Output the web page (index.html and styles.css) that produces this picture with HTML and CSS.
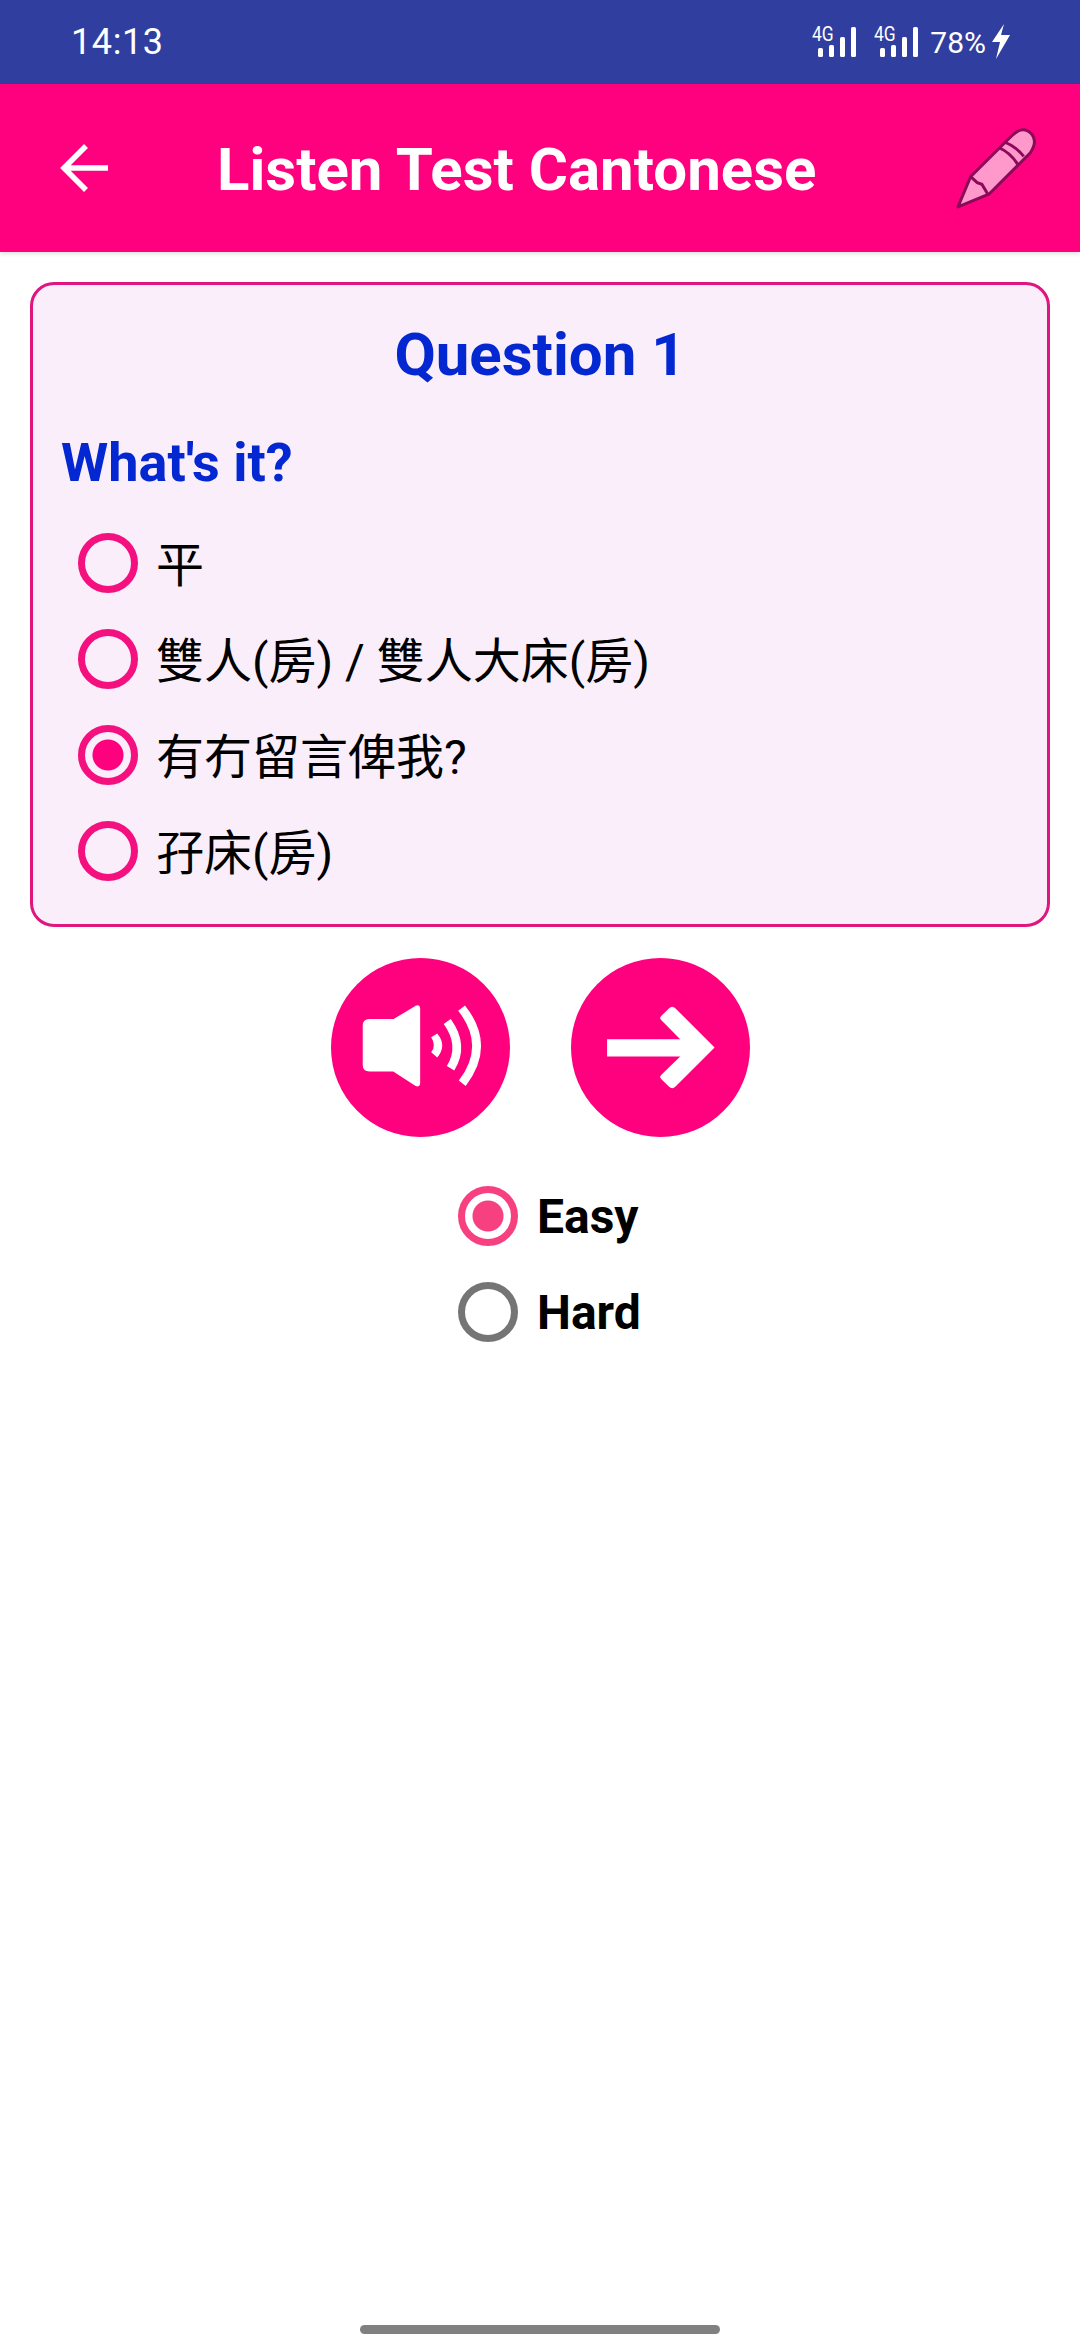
FILE: index.html
```html
<!DOCTYPE html>
<html lang="en">
<head>
    <meta charset="UTF-8">
    <title>Listen Test Cantonese</title>
    <link rel="stylesheet" href="styles.css">
</head>
<body>
    <div class="status-bar">
        <span class="time">14:13</span>
        <div class="status-right">
            <div class="signal">
                <span class="net">4G</span>
                <svg viewBox="0 0 45 30">
                    <rect x="6" y="21" width="5" height="9" rx="1.5"/>
                    <rect x="17" y="18" width="5" height="12" rx="1.5"/>
                    <rect x="28" y="10" width="5" height="20" rx="1.5"/>
                    <rect x="39" y="0" width="5" height="30" rx="1.5"/>
                </svg>
            </div>
            <div class="signal">
                <span class="net">4G</span>
                <svg viewBox="0 0 45 30">
                    <rect x="6" y="21" width="5" height="9" rx="1.5"/>
                    <rect x="17" y="18" width="5" height="12" rx="1.5"/>
                    <rect x="28" y="10" width="5" height="20" rx="1.5"/>
                    <rect x="39" y="0" width="5" height="30" rx="1.5"/>
                </svg>
            </div>
            <span class="battery">78%</span>
            <svg class="bolt" viewBox="0 0 20 36"><path d="M13 0 L1 18 H9 L5 35 L19 11 H10 Z"/></svg>
        </div>
    </div>

    <div class="toolbar">
        <svg class="back" viewBox="0 0 48 48"><path d="M48 24 H4 M26 2 L4 24 L26 46" fill="none" stroke="#fff" stroke-width="5.5"/></svg>
        <h1 class="title">Listen Test Cantonese</h1>
        <svg class="pencil" viewBox="520 375 250 255">
            <path d="M532 618 L570 527 L688 410 Q700 398 712 390 Q735 378 755 400 Q772 422 750 455 L625 580 Z" fill="#ff99cc" stroke="#8b0a57" stroke-width="9" stroke-linejoin="round"/>
            <path d="M570 527 L590 545 L604 550 L622 580" fill="none" stroke="#8b0a57" stroke-width="9"/>
            <path d="M672 423 Q705 435 730 466 M656 440 Q690 455 712 490" fill="none" stroke="#8b0a57" stroke-width="9"/>
        </svg>
    </div>

    <div class="card">
        <h2 class="question">Question 1</h2>
        <p class="prompt">What's it?</p>
        <div class="option"><span class="radio"></span><span class="label">平</span></div>
        <div class="option"><span class="radio"></span><span class="label">雙人(房) / 雙人大床(房)</span></div>
        <div class="option"><span class="radio checked"></span><span class="label">有冇留言俾我?</span></div>
        <div class="option"><span class="radio"></span><span class="label">孖床(房)</span></div>
    </div>

    <div class="actions">
        <div class="round-btn">
            <svg viewBox="0 0 536 536">
                <path d="M115 186 H188 L254 146 Q264 141 264 152 V374 Q264 385 254 380 L188 337 H115 Q98 337 98 320 V203 Q98 186 115 186 Z" fill="#fff" stroke="#fff" stroke-width="6" stroke-linejoin="round"/>
                <path d="M300 237 L318 226 Q348 262 318 298 L300 282 Q316 262 300 237 Z" fill="#fff"/>
                <path d="M348 190 Q400 262 358 330" fill="none" stroke="#fff" stroke-width="26"/>
                <path d="M391 150 Q480 262 393 375" fill="none" stroke="#fff" stroke-width="26"/>
            </svg>
        </div>
        <div class="round-btn">
            <svg viewBox="0 0 536 536">
                <path d="M108 243 H327 L270 186 Q264 180 270 174 L293 151 Q303 141 313 151 L430 268 L313 385 Q303 395 293 385 L270 362 Q264 356 270 350 L327 295 H108 Z" fill="#fff"/>
            </svg>
        </div>
    </div>

    <div class="levels">
        <div class="level"><span class="radio easy"></span><span>Easy</span></div>
        <div class="level"><span class="radio off"></span><span>Hard</span></div>
    </div>

    <div class="home-bar"></div>
</body>
</html>
```

FILE: styles.css
```css
* {
    box-sizing: border-box;
}
body {
    margin: 0;
    height: 2340px;
    background: #fff;
    font-family: Roboto, "Noto Sans CJK TC", sans-serif;
    display: flex;
    flex-direction: column;
    color: #000;
}
.status-bar {
    height: 84px;
    background: #303f9f;
    color: #fff;
    display: flex;
    align-items: center;
    justify-content: space-between;
    padding: 0 69px 0 71px;
}
.time {
    font-size: 36px;
    letter-spacing: 0.6px;
}
.status-right {
    display: flex;
    align-items: center;
    gap: 17px;
}
.signal {
    position: relative;
    width: 45px;
    height: 30px;
}
.signal svg {
    display: block;
    width: 45px;
    height: 30px;
    fill: #fff;
}
.net {
    position: absolute;
    left: 0;
    top: -3px;
    font-size: 21px;
    line-height: 21px;
    transform: scaleX(0.83);
    transform-origin: left top;
}
.battery {
    font-size: 30px;
    margin-left: -6px;
}
.bolt {
    width: 20px;
    height: 36px;
    fill: #fff;
    margin-left: -12px;
}
.toolbar {
    height: 168px;
    background: #ff007f;
    display: flex;
    align-items: center;
    padding: 0 43px 0 60px;
    box-shadow: 0 2px 4px rgba(0, 0, 0, 0.12);
}
.back {
    width: 48px;
    height: 48px;
}
.title {
    flex: 1;
    margin: 0;
    padding: 3px 0 0 109px;
    color: #fff;
    font-size: 60px;
    font-weight: 700;
}
.pencil {
    width: 83px;
    height: 85px;
}
.card {
    margin: 30px 30px 0;
    height: 645px;
    padding: 34px 28px 0;
    background: #f9eef9;
    border: 3px solid #e0157f;
    border-radius: 24px;
}
.question {
    margin: 0;
    color: #0327d0;
    font-size: 60px;
    font-weight: 700;
    line-height: 72px;
    text-align: center;
}
.prompt {
    margin: 40px 0 20px;
    color: #0327d0;
    font-size: 54px;
    font-weight: 700;
    line-height: 64px;
}
.option {
    height: 96px;
    display: flex;
    align-items: center;
    gap: 18px;
    padding-left: 17px;
    font-size: 48px;
}
.label {
    margin-bottom: 5px;
}
.radio {
    width: 60px;
    height: 60px;
    border: 7px solid #f5107f;
    border-radius: 50%;
    flex-shrink: 0;
}
.radio.checked {
    background: radial-gradient(circle, #ff007f 0 15px, transparent 16px);
}
.radio.easy {
    border-color: #f7407f;
    background: radial-gradient(circle, #f7407f 0 15px, transparent 16px);
}
.radio.off {
    border-color: #757575;
}
.actions {
    display: flex;
    justify-content: center;
    gap: 61px;
    margin-top: 31px;
    padding-left: 1px;
}
.round-btn {
    width: 179px;
    height: 179px;
    border-radius: 50%;
    background: #ff007f;
}
.round-btn svg {
    display: block;
    width: 100%;
    height: 100%;
}
.levels {
    display: flex;
    flex-direction: column;
    align-items: center;
    margin: 31px 0 0 20px;
}
.level {
    height: 96px;
    width: 184px;
    display: flex;
    align-items: center;
    gap: 19px;
    font-size: 48px;
    font-weight: 700;
}
.home-bar {
    width: 360px;
    height: 9px;
    margin: auto auto 6px;
    background: #808080;
    border-radius: 5px;
}
```
